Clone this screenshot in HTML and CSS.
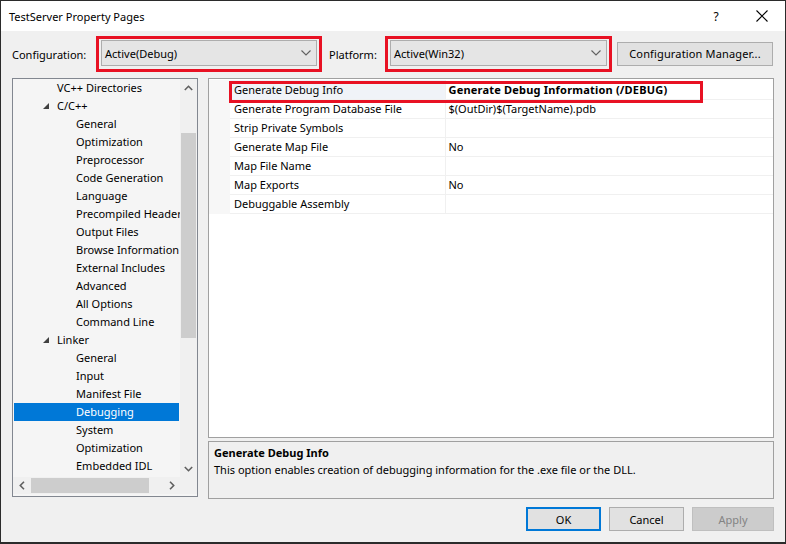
FILE: index.html
```html
<!DOCTYPE html>
<html lang="en">
<head>
    <meta charset="UTF-8">
    <meta name="viewport" content="width=device-width, initial-scale=1.0">
    <title>TestServer Property Pages</title>
    <link rel="stylesheet" href="styles.css">
</head>
<body>
<div class="window">
    <header class="titlebar">
        <span class="title">TestServer Property Pages</span>
        <span class="caption-btn help">?</span>
        <span class="caption-btn close">
            <svg width="12" height="12" viewBox="0 0 12 12"><path d="M0.5 0.5L11.5 11.5M11.5 0.5L0.5 11.5" stroke="#000" stroke-width="1.1" fill="none"/></svg>
        </span>
    </header>

    <div class="toolbar">
        <label class="label label-config">Configuration:</label>
        <div class="mark mark-config">
            <div class="combo">
                <span>Active(Debug)</span>
                <svg class="chev" width="10" height="6" viewBox="0 0 10 6"><path d="M0.5 0.5L5 5L9.5 0.5" stroke="#606060" stroke-width="1.1" fill="none"/></svg>
            </div>
        </div>
        <label class="label label-platform">Platform:</label>
        <div class="mark mark-platform">
            <div class="combo">
                <span>Active(Win32)</span>
                <svg class="chev" width="10" height="6" viewBox="0 0 10 6"><path d="M0.5 0.5L5 5L9.5 0.5" stroke="#606060" stroke-width="1.1" fill="none"/></svg>
            </div>
        </div>
        <button class="btn btn-manager">Configuration Manager...</button>
    </div>

    <main class="main">
        <div class="tree">
            <ul class="tree-list">
                <li class="lvl1">VC++ Directories</li>
                <li class="lvl1 open"><span class="tri"></span>C/C++</li>
                <li class="lvl2">General</li>
                <li class="lvl2">Optimization</li>
                <li class="lvl2">Preprocessor</li>
                <li class="lvl2">Code Generation</li>
                <li class="lvl2">Language</li>
                <li class="lvl2">Precompiled Headers</li>
                <li class="lvl2">Output Files</li>
                <li class="lvl2">Browse Information</li>
                <li class="lvl2">External Includes</li>
                <li class="lvl2">Advanced</li>
                <li class="lvl2">All Options</li>
                <li class="lvl2">Command Line</li>
                <li class="lvl1 open"><span class="tri"></span>Linker</li>
                <li class="lvl2">General</li>
                <li class="lvl2">Input</li>
                <li class="lvl2">Manifest File</li>
                <li class="lvl2 selected">Debugging</li>
                <li class="lvl2">System</li>
                <li class="lvl2">Optimization</li>
                <li class="lvl2">Embedded IDL</li>
            </ul>
            <div class="vscroll">
                <div class="sb-arrow">
                    <svg width="9" height="6" viewBox="0 0 9 6"><path d="M0.8 5L4.5 1.3L8.2 5" stroke="#606060" stroke-width="1.6" fill="none"/></svg>
                </div>
                <div class="vthumb"></div>
                <div class="sb-fill"></div>
                <div class="sb-arrow">
                    <svg width="9" height="6" viewBox="0 0 9 6"><path d="M0.8 1L4.5 4.7L8.2 1" stroke="#606060" stroke-width="1.6" fill="none"/></svg>
                </div>
            </div>
            <div class="hscroll">
                <div class="sb-arrow">
                    <svg width="6" height="9" viewBox="0 0 6 9"><path d="M5 0.8L1.3 4.5L5 8.2" stroke="#606060" stroke-width="1.6" fill="none"/></svg>
                </div>
                <div class="hthumb"></div>
                <div class="sb-fill"></div>
                <div class="sb-arrow">
                    <svg width="6" height="9" viewBox="0 0 6 9"><path d="M1 0.8L4.7 4.5L1 8.2" stroke="#606060" stroke-width="1.6" fill="none"/></svg>
                </div>
            </div>
            <div class="corner"></div>
        </div>

        <div class="right">
            <div class="grid">
                <table class="props">
                    <tr class="current"><td class="gutter"></td><td class="name">Generate Debug Info</td><td class="value bold">Generate Debug Information (/DEBUG)</td></tr>
                    <tr><td class="gutter"></td><td class="name">Generate Program Database File</td><td class="value">$(OutDir)$(TargetName).pdb</td></tr>
                    <tr><td class="gutter"></td><td class="name">Strip Private Symbols</td><td class="value"></td></tr>
                    <tr><td class="gutter"></td><td class="name">Generate Map File</td><td class="value">No</td></tr>
                    <tr><td class="gutter"></td><td class="name">Map File Name</td><td class="value"></td></tr>
                    <tr><td class="gutter"></td><td class="name">Map Exports</td><td class="value">No</td></tr>
                    <tr><td class="gutter"></td><td class="name">Debuggable Assembly</td><td class="value"></td></tr>
                </table>
                <!-- marker round the first row -->
                <div class="mark-row"></div>
            </div>
            <div class="desc">
                <div class="desc-title">Generate Debug Info</div>
                <div class="desc-text">This option enables creation of debugging information for the .exe file or the DLL.</div>
            </div>
        </div>
    </main>

    <footer class="buttons">
        <button class="btn btn-ok">OK</button>
        <button class="btn btn-cancel">Cancel</button>
        <button class="btn btn-apply" disabled>Apply</button>
    </footer>
</div>
</body>
</html>
```

FILE: styles.css
```css
* {
    margin: 0;
    padding: 0;
    box-sizing: border-box;
}

body {
    background-color: #2b2b2b;
    font-family: "Noto Sans", sans-serif;
    font-size: 11px;
    color: #000;
    overflow: hidden;
}

.window {
    width: 786px;
    height: 544px;
    border: 1px solid #2b2b2b;
    border-bottom-width: 2px;
    background-color: #f0f0f0;
    display: flex;
    flex-direction: column;
}

/* title bar */
.titlebar {
    height: 30px;
    background-color: #fff;
    display: flex;
    align-items: center;
    flex-shrink: 0;
}

.title {
    flex-grow: 1;
    padding-left: 8px;
    font-size: 11px;
}

.caption-btn {
    width: 46px;
    height: 30px;
    display: flex;
    align-items: center;
    justify-content: center;
}

.help {
    font-size: 12px;
}

/* configuration row */
.toolbar {
    display: flex;
    align-items: center;
    padding: 5px 0 0 11px;
    height: 41px;
    flex-shrink: 0;
}

.label-config {
    width: 84px;
}

.label-platform {
    width: 56px;
    margin-left: 7px;
}

.mark {
    border: 3px solid #e81123;
    padding: 1px 2px 3px 2px;
}

.mark-config {
    width: 226px;
}

.mark-platform {
    width: 227px;
}

.combo {
    height: 26px;
    background-color: #e5e5e5;
    border: 1px solid #adadad;
    display: flex;
    align-items: center;
    justify-content: space-between;
    padding: 0 5px 0 3px;
}

.btn {
    font-family: "Noto Sans", sans-serif;
    font-size: 11px;
    color: #000;
    background-color: #e1e1e1;
    border: 1px solid #adadad;
    height: 24px;
}

.btn-manager {
    width: 156px;
    margin-left: 5px;
    margin-top: -1px;
    letter-spacing: 0.15px;
}

/* main area */
.main {
    display: flex;
    gap: 10px;
    padding: 0 10px 0 11px;
    margin-top: 6px;
    height: 421px;
    flex-shrink: 0;
}

.tree {
    width: 186px;
    height: 419px;
    border: 1px solid #828790;
    background-color: #f5f5f5;
    display: grid;
    grid-template-columns: 167px 17px;
    grid-template-rows: 398px 17px;
}

.tree-list {
    list-style: none;
    overflow: hidden;
}

.tree-list li {
    height: 18px;
    line-height: 18px;
    white-space: nowrap;
    overflow: hidden;
    position: relative;
}

.lvl1 {
    padding-left: 44px;
}

.lvl2 {
    padding-left: 63px;
}

.tree-list li.selected {
    background-color: #0078d7;
    color: #fff;
    margin: 0 1px;
    padding-left: 62px;
}

.tri {
    position: absolute;
    left: 30px;
    top: 6px;
    width: 0;
    height: 0;
    border-style: solid;
    border-width: 0 0 6px 6px;
    border-color: transparent transparent #404040 transparent;
}

.vscroll,
.hscroll {
    background-color: #f0f0f0;
    display: flex;
}

.vscroll {
    flex-direction: column;
}

.sb-arrow {
    width: 17px;
    height: 17px;
    flex-shrink: 0;
    display: flex;
    align-items: center;
    justify-content: center;
}

.sb-fill {
    flex-grow: 1;
}

.vthumb {
    margin: 37px 1px 0 1px;
    height: 205px;
    background-color: #cdcdcd;
}

.hthumb {
    margin: 1px 0 1px 1px;
    width: 118px;
    background-color: #cdcdcd;
}

.corner {
    background-color: #f0f0f0;
}

/* property grid */
.right {
    width: 566px;
    display: flex;
    flex-direction: column;
    gap: 3px;
}

.grid {
    height: 360px;
    border: 1px solid #a0a0a0;
    background-color: #fff;
    padding-top: 1px;
    position: relative;
}

.props {
    border-collapse: collapse;
    width: 100%;
    table-layout: fixed;
}

.props td {
    height: 19px;
    border-bottom: 1px solid #f0f0f0;
    padding: 0 4px;
    white-space: nowrap;
    overflow: hidden;
}

.props td.gutter {
    width: 21px;
    background-color: #f7f7f7;
    border-bottom-color: #f7f7f7;
    padding: 0;
}

.props td.name {
    width: 215px;
    border-right: 1px solid #f0f0f0;
}

.props td.value {
    padding-left: 3px;
}

.props tr.current td.name {
    background-color: #f0f3f8;
}

.bold {
    font-weight: bold;
    letter-spacing: 0.2px;
}

.mark-row {
    position: absolute;
    left: 20px;
    top: 2px;
    width: 474px;
    height: 22px;
    border: 3px solid #e81123;
}

.desc {
    height: 58px;
    border: 1px solid #a0a0a0;
    padding: 2px 5px;
    line-height: 17px;
}

.desc-title {
    font-weight: bold;
}

/* dialog buttons */
.buttons {
    display: flex;
    justify-content: flex-end;
    gap: 8px;
    padding: 8px 11px 0 0;
}

.btn-ok {
    width: 75px;
    border: 2px solid #0078d7;
}

.btn-cancel {
    width: 75px;
}

.btn-apply {
    width: 82px;
    background-color: #cccccc;
    border-color: #bfbfbf;
    color: #838383;
}
```
